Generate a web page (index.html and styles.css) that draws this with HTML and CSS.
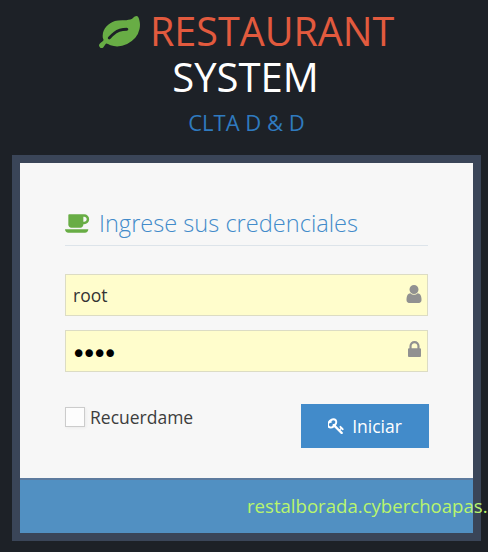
FILE: index.html
```html
<!DOCTYPE html>
<html lang="es">
<head>
<meta charset="utf-8">
<title>Restaurant System</title>
<link rel="stylesheet" href="styles.css">
</head>
<body>
<header class="brand">
  <h1 class="brand-title">
    <svg class="leaf" viewBox="0 128 1792 1400" aria-hidden="true"><path d="M1280 704q0-26-19-45t-45-19q-172 0-318 49.500t-259.500 134-235.500 219.500q-19 21-19 45 0 26 19 45t45 19q24 0 45-19 27-24 74-71t67-66q137-124 268.500-176t313.500-52q26 0 45-19t19-45zm512-198q0 95-20 193-46 224-184.500 383t-357.500 268q-214 108-438 108-148 0-286-47-15-5-88-42t-96-37q-16 0-39.500 32t-45 70-52.500 70-60 32q-30 0-51-11t-31-24-27-42q-2-4-6-11t-5.500-10-3-9.500-1.500-13.500q0-35 31-73.500t68-65.500 68-56 31-46q0-4-14-38t-16-44q-9-51-9-104 0-115 43.500-220t119-184.500 170.500-139 204-95.500q55-18 145-25.500t179.500-9 178.500-6 163.500-24 113.500-56.500l29.500-29.500 29.500-28 27-20 36.500-16 43.500-4.500q39 0 70.500 46t47.500 112 24 124 8 96z"/></svg>
    <span class="brand-red">RESTAURANT</span><br>
    <span class="brand-white">SYSTEM</span>
  </h1>
  <h2 class="brand-sub">CLTA D &amp; D</h2>
</header>
<main class="panel">
  <section class="panel-body">
    <h3 class="panel-title">
      <svg class="cup" viewBox="-64 256 1920 1408" aria-hidden="true"><path d="M1600 640q0-80-56-136t-136-56h-64v384h64q80 0 136-56t56-136zm-1664 768h1792q0 106-75 181t-181 75h-1280q-106 0-181-75t-75-181zm1856-768q0 159-112.500 271.500t-271.500 112.500h-64v32q0 92-66 158t-158 66h-704q-92 0-158-66t-66-158v-736q0-26 19-45t45-19h1152q159 0 271.500 112.500t112.500 271.500z"/></svg>
      <span>Ingrese sus credenciales</span>
    </h3>
    <form class="login-form">
      <div class="field">
        <input class="input" type="text" value="root" aria-label="Usuario">
        <svg class="field-icon" viewBox="256 128 1280 1536" aria-hidden="true"><path d="M1536 1399q0 109-62.500 187t-150.500 78h-854q-88 0-150.500-78t-62.500-187q0-85 8.500-160.500t31.500-152 58.500-131 94-89 134.500-34.500q131 128 313 128t313-128q76 0 134.500 34.500t94 89 58.500 131 31.500 152 8.500 160.500zm-256-887q0 159-112.500 271.500t-271.500 112.500-271.500-112.500-112.500-271.500 112.500-271.500 271.500-112.500 271.500 112.500 112.500 271.500z"/></svg>
      </div>
      <div class="field">
        <input class="input input-pass" type="password" value="root" aria-label="Clave">
        <svg class="field-icon field-icon-lock" viewBox="320 128 1152 1408" aria-hidden="true"><path d="M640 768h512v-192q0-106-75-181t-181-75-181 75-75 181v192zm832 96v576q0 40-28 68t-68 28h-960q-40 0-68-28t-28-68v-576q0-40 28-68t68-28h32v-192q0-184 132-316t316-132 316 132 132 316v192h32q40 0 68 28t28 68z"/></svg>
      </div>
      <div class="actions">
        <label class="remember">
          <span class="checkbox"></span>
          <span>Recuerdame</span>
        </label>
        <button class="submit" type="button">
          <svg class="key" viewBox="100 120 1600 1560" aria-hidden="true"><path d="M832 512q0-80-56-136t-136-56-136 56-56 136q0 42 19 83-41-19-83-19-80 0-136 56t-56 136 56 136 136 56 136-56 56-136q0-42-19-83 41 19 83 19 80 0 136-56t56-136zm851 704q0 17-49 66t-66 49q-9 0-28.500-16t-36.500-33-38.500-40-24.500-26l-96 96 220 220q28 28 28 68 0 42-39 81t-81 39q-40 0-68-28l-671-671q-176 131-365 131-163 0-265.500-102.500t-102.500-265.500q0-160 95-313t248-248 313-95q163 0 265.500 102.500t102.500 265.500q0 189-131 365l355 355 96-96q-3-3-26-24.500t-40-38.500-33-36.500-16-28.500q0-17 49-66t66-49q13 0 23 10 6 6 46 44.500t82 79.500 86.500 86 73 78 28.500 41z"/></svg>
          <span>Iniciar</span>
        </button>
      </div>
    </form>
  </section>
  <footer class="panel-footer"><span class="ticker">restalborada.cyberchoapas.</span></footer>
</main>
</body>
</html>
```

FILE: styles.css
```css
html, body { height: 100%; }
body {
  margin: 0;
  background: #1d2127;
  font-family: "Open Sans", sans-serif;
  overflow: hidden;
}
.brand { height: 155px; text-align: center; overflow: hidden; }
.brand-title {
  margin: 0;
  padding-top: 9px;
  font-size: 39.500px;
  line-height: 45px;
  font-weight: 400;
}
.leaf { width: 41px; height: 32px; margin-left: 5px; fill: #68ad45; vertical-align: -2px; }
.brand-red { color: #e25a3e; }
.brand-white { color: #fff; font-size: 40px; margin-left: 3px; }
.brand-sub {
  margin: 7px 0 0;
  padding-left: 5px;
  font-size: 22px;
  line-height: 30px;
  font-weight: 400;
  color: #2f7abf;
}
.panel {
  width: 453px;
  margin-left: 12px;
  border: 8px solid #3a4558;
}
.panel-body {
  height: 315px;
  background: #f7f7f7;
  padding: 0 45px;
}
.panel-title {
  margin: 0;
  padding-top: 38px;
  height: 44px;
  display: flex;
  align-items: center;
  gap: 9px;
  font-size: 23.600px;
  font-weight: 300;
  color: #428bca;
  border-bottom: 1px solid #dde4ea;
  width: 363px;
}
.cup { width: 25px; height: 19px; fill: #68ad45; }
.login-form { width: 364px; padding-top: 28px; }
.field { position: relative; height: 42px; margin-bottom: 14px; }
.input {
  box-sizing: border-box;
  width: 363px;
  height: 42px;
  padding: 0 7px;
  display: block;
  background: #fffdcc;
  border: 1px solid #dcdcc4;
  border-radius: 0;
  font-family: "Open Sans", sans-serif;
  font-size: 17.500px;
  color: #333;
  outline: none;
}
.input-pass {
  padding-left: 5px;
  padding-top: 5px;
  font-family: "DejaVu Sans", sans-serif;
  font-size: 26px;
  letter-spacing: -4.800px;
  color: #000;
}
.field-icon { position: absolute; right: 7px; top: 11px; width: 16px; height: 18px; fill: #919191; }
.field-icon-lock { right: 8px; top: 11px; width: 13px; height: 16px; }
.actions { display: flex; justify-content: space-between; align-items: flex-start; padding-top: 18px; }
.remember {
  display: flex;
  align-items: center;
  gap: 5px;
  height: 20px;
  margin-top: 3px;
  font-size: 17.500px;
  color: #3d3d3d;
}
.checkbox {
  box-sizing: border-box;
  width: 20px;
  height: 20px;
  background: #fdfdfd;
  border: 1px solid #ccc;
  box-shadow: 1px 1px 3px rgba(0, 0, 0, .05);
}
.submit {
  width: 128px;
  height: 44px;
  display: flex;
  align-items: center;
  justify-content: center;
  gap: 8px;
  border: 0;
  background: #428bca;
  color: #fff;
  font-family: "Open Sans", sans-serif;
  font-size: 17.500px;
}
.key { width: 16px; height: 16px; fill: #fff; }
.panel-footer {
  box-sizing: border-box;
  height: 55px;
  background: #5190c2;
  border-top: 2px solid #5d7b9e;
  padding-left: 227px;
  font-size: 18.600px;
  line-height: 52px;
  white-space: nowrap;
  color: #b9f56d;
}
```
